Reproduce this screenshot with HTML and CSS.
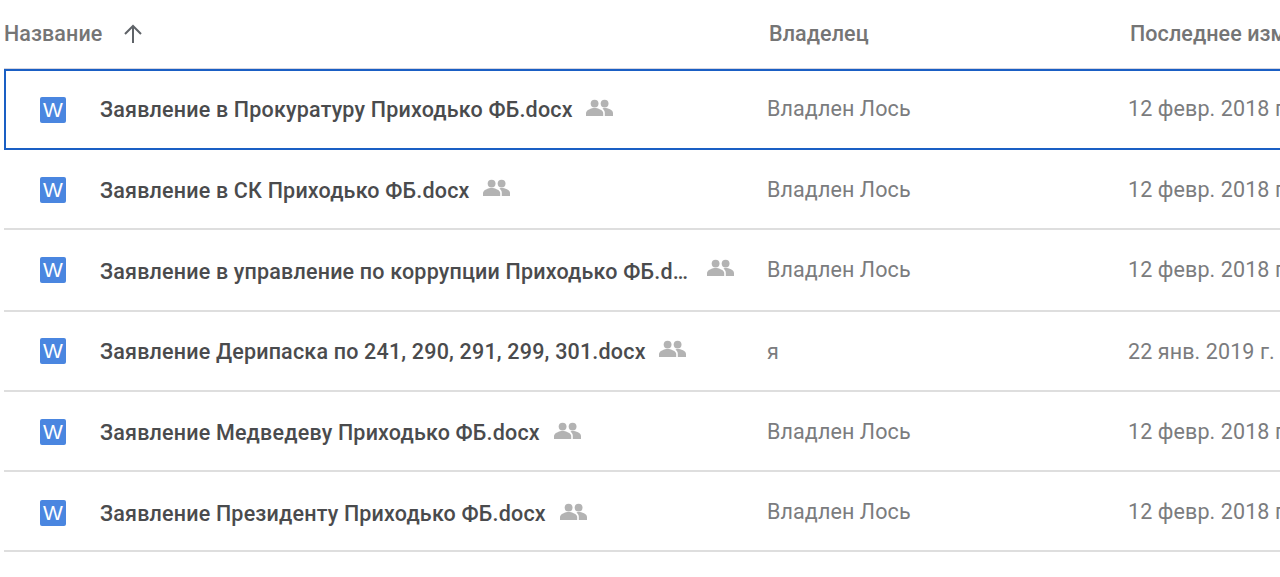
FILE: index.html
```html
<!DOCTYPE html>
<html lang="ru">
<head>
<meta charset="utf-8">
<title>Файлы</title>
<link rel="stylesheet" href="styles.css">
</head>
<body>
<svg class="defs" width="0" height="0" aria-hidden="true">
  <symbol id="people" viewBox="0 0 27 17">
    <circle cx="8.6" cy="4.6" r="3.9"/>
    <circle cx="18.6" cy="4.6" r="3.9"/>
    <path d="M0 17v-3c0-3 5.500-5 8.600-5s8.600 2 8.600 5v3z"/>
    <path d="M18.800 17v-3.200c0-1.800-.9-3.300-2.300-4.400.8-.2 1.600-.3 2.200-.3 3.100 0 8.300 1.900 8.300 4.800V17z"/>
  </symbol>
</svg>
<main class="list">
  <header class="head">
    <div class="col-name">
      <span>Название</span>
      <svg class="arrow" viewBox="0 0 20 20" width="20" height="20"><path d="M10 19V2M2 10l8-8 8 8"/></svg>
    </div>
    <div class="col-owner">Владелец</div>
    <div class="col-date">Последнее изменение</div>
  </header>
  <div class="row selected">
    <div class="col-name"><span class="doc">W</span><span class="title">Заявление в Прокуратуру Приходько ФБ.docx</span><svg class="shared"><use href="#people"/></svg></div>
    <div class="col-owner">Владлен Лось</div>
    <div class="col-date">12 февр. 2018 г.</div>
  </div>
  <div class="row low">
    <div class="col-name"><span class="doc">W</span><span class="title">Заявление в СК Приходько ФБ.docx</span><svg class="shared"><use href="#people"/></svg></div>
    <div class="col-owner">Владлен Лось</div>
    <div class="col-date">12 февр. 2018 г.</div>
  </div>
  <div class="row tall">
    <div class="col-name"><span class="doc">W</span><span class="title clip">Заявление в управление по коррупции Приходько ФБ.docx</span><svg class="shared"><use href="#people"/></svg></div>
    <div class="col-owner">Владлен Лось</div>
    <div class="col-date">12 февр. 2018 г.</div>
  </div>
  <div class="row high">
    <div class="col-name"><span class="doc">W</span><span class="title">Заявление Дерипаска по 241, 290, 291, 299, 301.docx</span><svg class="shared"><use href="#people"/></svg></div>
    <div class="col-owner">я</div>
    <div class="col-date">22 янв. 2019 г.</div>
  </div>
  <div class="row low drop">
    <div class="col-name"><span class="doc">W</span><span class="title">Заявление Медведеву Приходько ФБ.docx</span><svg class="shared"><use href="#people"/></svg></div>
    <div class="col-owner">Владлен Лось</div>
    <div class="col-date">12 февр. 2018 г.</div>
  </div>
  <div class="row last">
    <div class="col-name"><span class="doc">W</span><span class="title">Заявление Президенту Приходько ФБ.docx</span><svg class="shared"><use href="#people"/></svg></div>
    <div class="col-owner">Владлен Лось</div>
    <div class="col-date">12 февр. 2018 г.</div>
  </div>
</main>
</body>
</html>
```
FILE: styles.css
```css
html, body {
  margin: 0;
  height: 577px;
  overflow: hidden;
  background: #fff;
}
.defs {
  display: block;
  height: 0;
}
.list {
  padding-left: 4px;
  width: 1276px;
  font-family: Roboto, "Noto Sans", sans-serif;
}
.head, .row {
  display: grid;
  grid-template-columns: 763px 361px 1fr;
  white-space: nowrap;
  overflow: hidden;
}
.head {
  align-items: center;
  box-sizing: border-box;
  border-bottom: 2px solid #d5d5e0;
  height: 70px;
  color: #757575;
  font-size: 21.500px;
  font-weight: 500;
  letter-spacing: 0.08px;
  padding-bottom: 1px;
}
.head .col-name {
  display: flex;
  align-items: center;
  gap: 21px;
}
.head .col-owner { padding-left: 2px; }
.head .col-date { padding-left: 2px; }
.arrow {
  fill: none;
  stroke: #5f6368;
  stroke-width: 2;
}
.row {
  box-sizing: border-box;
  height: 80px;
  align-items: center;
  border-bottom: 2px solid #dedede;
  color: #7b7c7e;
  font-size: 21.500px;
  letter-spacing: 0.1px;
}
.row.tall { height: 82px; }
.row.selected {
  border: 2px solid #1a5fc4;
  border-right: 0;
  margin-top: -1px;
  height: 81px;
}
.row.selected .col-owner,
.row.selected .col-date,
.row.tall .col-owner,
.row.tall .col-date { padding-bottom: 2px; }
.row .col-name {
  display: flex;
  align-items: center;
  padding-left: 36px;
  min-width: 0;
}
.row.selected .col-name { padding-left: 34px; }
.row.selected .col-owner { margin-left: -2px; }
.row.selected .col-date { margin-left: -2px; }
.doc {
  flex: none;
  width: 26px;
  height: 26px;
  border-radius: 2px;
  background: #4a86e0;
  color: #fff;
  font-family: "Liberation Sans", sans-serif;
  font-size: 21px;
  line-height: 26px;
  text-align: center;
  letter-spacing: 0;
  margin-right: 34px;
}
.low .doc { margin-top: 2px; }
.last .doc { margin-top: 4px; }
.title {
  color: #4a4b4d;
  font-size: 21.500px;
  font-weight: 500;
  letter-spacing: 0.19px;
  padding-top: 2px;
}
.selected .title, .high .title { padding-top: 0; }
.last .title { padding-top: 4px; }
.title.clip {
  max-width: 590px;
  overflow: hidden;
  text-overflow: ellipsis;
}
.shared {
  flex: none;
  width: 27px;
  height: 17px;
  margin-left: 13px;
  margin-top: -5px;
  fill: #b3b3b3;
}
.low .shared { margin-top: -3px; }
.drop .shared { margin-top: -1px; margin-left: 14px; }
.last .shared { margin-top: 1px; margin-left: 14px; }
.clip + .shared { margin-left: 17px; }
```
